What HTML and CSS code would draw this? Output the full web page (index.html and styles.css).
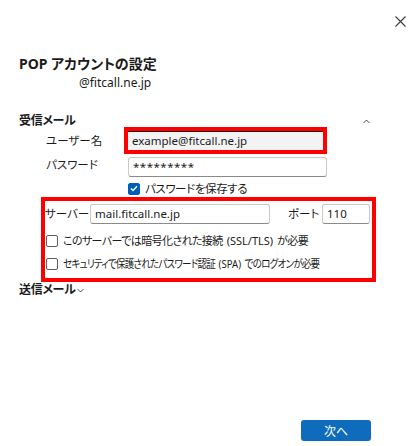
FILE: index.html
```html
<!DOCTYPE html>
<html lang="ja">
<head>
<meta charset="utf-8">
<title>POP アカウントの設定</title>
<link rel="stylesheet" href="styles.css">
</head>
<body>
<div class="dialog">
  <button class="close" aria-label="閉じる">
    <svg width="11" height="11" viewBox="0 0 11 11"><path d="M0.5 0.5 L10.5 10.5 M10.5 0.5 L0.5 10.5" stroke="#3a3a3a" stroke-width="1.1" fill="none"/></svg>
  </button>

  <header class="head">
    <h1 class="title">POP アカウントの設定</h1>
    <div class="account">@fitcall.ne.jp</div>
  </header>

  <div class="section-head">
    <span class="section-title">受信メール</span>
    <svg class="chev-up" width="7" height="5" viewBox="0 0 7 5"><path d="M0.5 4 L3.5 1 L6.5 4" stroke="#555" stroke-width="1" fill="none"/></svg>
  </div>

  <div class="form">
    <label class="lbl">ユーザー名</label>
    <div class="mark mark-user">
      <div class="input input-focus">example@fitcall.ne.jp</div>
    </div>

    <label class="lbl lbl-pw">パスワード</label>
    <div class="input input-pw">*********</div>

    <div class="spacer"></div>
    <div class="check-row">
      <span class="cb cb-on">
        <svg width="8" height="7" viewBox="0 0 8 7"><path d="M1 3.6 L3 5.6 L7 1.2" stroke="#fff" stroke-width="1.4" fill="none"/></svg>
      </span>
      <span class="tight">パスワードを保存する</span>
    </div>
  </div>

  <div class="mark mark-server">
    <div class="server-row">
      <span class="lbl lbl-server">サーバー</span>
      <div class="input input-server">mail.fitcall.ne.jp</div>
      <span class="lbl lbl-port">ポート</span>
      <div class="input input-port">110</div>
    </div>
    <div class="check-row opt">
      <span class="cb"></span>
      <span class="opt-text opt-1">このサーバーでは暗号化された接続<span class="latin">(SSL/TLS)</span>が必要</span>
    </div>
    <div class="check-row opt">
      <span class="cb"></span>
      <span class="opt-text opt-2">セキュリティで保護されたパスワード認証<span class="latin">(SPA)</span>でのログオンが必要</span>
    </div>
  </div>

  <div class="section-head send">
    <span class="section-title">送信メール</span>
    <svg class="chev-down" width="7" height="5" viewBox="0 0 7 5"><path d="M0.5 1 L3.5 4 L6.5 1" stroke="#555" stroke-width="1" fill="none"/></svg>
  </div>

  <div class="footer">
    <button class="next">次へ</button>
  </div>
</div>
</body>
</html>
```

FILE: styles.css
```css
* { box-sizing: border-box; }

html, body {
  margin: 0;
  padding: 0;
  background: #ffffff;
}

body {
  font-family: "Noto Sans", "Noto Sans CJK JP", sans-serif;
  font-size: 11.5px;
  font-feature-settings: "palt" 1;
  color: #1b1b1b;
}

.dialog {
  position: relative;
  width: 416px;
  height: 446px;
  padding: 54px 19px 0 19px;
  display: flex;
  flex-direction: column;
}

.close {
  position: absolute;
  top: 16px;
  right: 10px;
  width: 11px;
  height: 11px;
  padding: 0;
  border: 0;
  background: transparent;
  display: flex;
}

.head { display: flex; flex-direction: column; }

.title {
  margin: 0;
  font-size: 14px;
  line-height: 20px;
  font-weight: 700;
  color: #1b1b1b;
}

.account {
  margin-left: 60px;
  line-height: 18px;
  font-size: 12px;
  color: #1b1b1b;
}

.section-head {
  margin-top: 20px;
  height: 18px;
  display: flex;
  align-items: center;
  justify-content: space-between;
  padding-right: 27px;
}

.section-title {
  font-weight: 700;
  line-height: 18px;
  font-size: 12px;
  letter-spacing: -0.3px;
}

.form {
  margin-left: 27px;
  display: grid;
  grid-template-columns: 82px 199px;
  row-gap: 3px;
  align-items: center;
  margin-top: -3px;
}

.lbl { line-height: 16px; white-space: nowrap; }
.lbl-pw { align-self: start; }

.mark {
  border: 4px solid #ff0000;
}

.mark-user {
  margin-left: -4px;
  height: 27px;
  width: 203px;
}

.input {
  height: 20px;
  border: 1px solid #c9c9c9;
  border-bottom-color: #8a8a8a;
  border-radius: 3px;
  background: #fff;
  padding: 0 4px;
  line-height: 18px;
  font-size: 11.5px;
  color: #1b1b1b;
  white-space: nowrap;
  overflow: hidden;
}

.input-focus {
  height: 19px;
  border: 0;
  border-top: 1px solid #1b1b1b;
  border-radius: 0;
  background: #f3f3f3;
  padding-left: 4px;
  line-height: 18px;
}

.input-pw {
  height: 20px;
  letter-spacing: 0.5px;
}

.check-row {
  display: flex;
  align-items: center;
  gap: 5px;
  height: 17px;
  line-height: 16px;
  white-space: nowrap;
}

.tight { letter-spacing: -0.4px; }

.cb {
  width: 12px;
  height: 12px;
  border: 1px solid #5d5d5d;
  border-radius: 2px;
  background: #fff;
  display: flex;
  align-items: center;
  justify-content: center;
  flex: none;
}

.cb-on {
  background: #005fb8;
  border-color: #005fb8;
}

.mark-server {
  margin-left: 22px;
  margin-top: 0;
  width: 335px;
  height: 85px;
  padding: 3px 0 0 0;
  display: flex;
  flex-direction: column;
  flex: none;
}

.server-row {
  display: flex;
  align-items: center;
  height: 20px;
}

.lbl-server {
  width: 45px;
  flex: none;
}

.input-server {
  width: 180px;
  flex: none;
}

.lbl-port {
  margin-left: 18px;
  width: 34px;
  flex: none;
}

.input-port {
  width: 48px;
  flex: none;
}

.opt {
  margin-top: 8px;
  margin-left: 1px;
}

.opt + .opt { margin-top: 6px; }

.opt-text {
  display: inline-block;
  font-size: 11px;
  transform-origin: left center;
}
.opt-1 { letter-spacing: -0.6px; }
.opt-2 {
  letter-spacing: -0.9px;
  transform: scaleX(0.87);
}
.opt-text .latin {
  letter-spacing: 0;
  margin: 0 4px;
}

.send {
  margin-top: -1px;
  justify-content: flex-start;
  gap: 1px;
}

.footer {
  margin-top: auto;
  padding: 0 26px 5px 0;
  display: flex;
  justify-content: flex-end;
}

.next {
  width: 70px;
  height: 21px;
  border: 0;
  border-radius: 3px;
  background: #0f6cbd;
  color: #fff;
  font-family: "Noto Sans CJK JP", sans-serif;
  font-size: 12px;
  padding: 0;
}
```
